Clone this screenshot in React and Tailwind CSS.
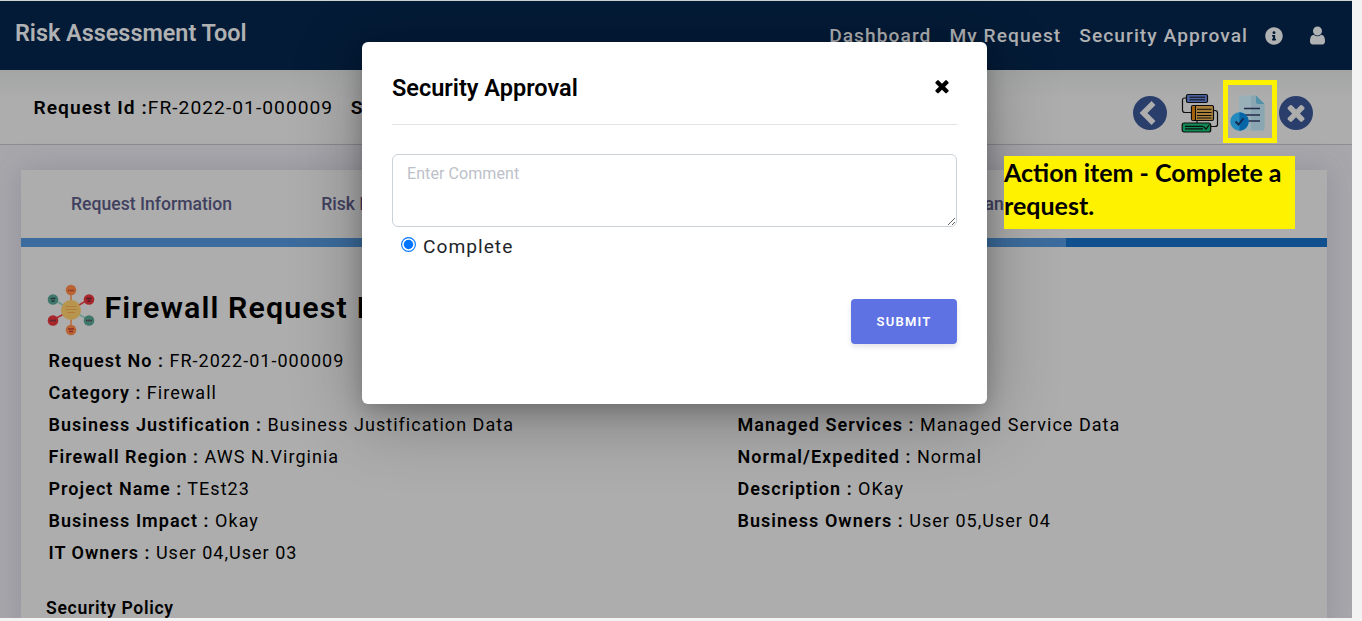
import React from "react";
import { FaInfoCircle } from "react-icons/fa";

const leftFields = [
  ["Request No :", "FR-2022-01-000009"],
  ["Category :", "Firewall"],
  ["Business Justification :", "Business Justification Data"],
  ["Firewall Region :", "AWS N.Virginia"],
  ["Project Name :", "TEst23"],
  ["Business Impact :", "Okay"],
  ["IT Owners :", "User 04,User 03"],
];

const rightFields = [
  ["Managed Services :", "Managed Service Data"],
  ["Normal/Expedited :", "Normal"],
  ["Description :", "OKay"],
  ["Business Owners :", "User 05,User 04"],
];

const TIMES =
  "M1490 1322q0 40-28 68l-136 136q-28 28-68 28t-68-28l-294-294-294 294q-28 28-68 28t-68-28l-136-136q-28-28-28-68t28-68l294-294-294-294q-28-28-28-68t28-68l136-136q28-28 68-28t68 28l294 294 294-294q28-28 68-28t68 28l136 136q28 28 28 68t-28 68l-294 294 294 294q28 28 28 68z";

const USER =
  "M1536 1399q0 109-62.5 187t-150.5 78h-854q-88 0-150.5-78t-62.5-187q0-85 8.5-160.5t31.5-152 58.5-131 94-89 134.5-34.5q131 128 313 128t313-128q76 0 134.5 34.5t94 89 58.5 131 31.5 152 8.5 160.5zm-256-887q0 159-112.5 271.5t-271.5 112.5-271.5-112.5-112.5-271.5 112.5-271.5 271.5-112.5 271.5 112.5 112.5 271.5z";

function BackIcon() {
  return (
    <svg width="34" height="34" viewBox="0 0 34 34">
      <circle cx="17" cy="17" r="17" fill="#2a3e6c" />
      <path d="M20.500 7L10.500 17L20.500 27" fill="none" stroke="#adadad" strokeWidth="5.500" />
    </svg>
  );
}

function WorkflowIcon() {
  return (
    <svg width="38" height="40" viewBox="0 0 38 40" fill="none" stroke="#0c0c0c" strokeWidth="1.2">
      <path d="M5 5H3Q1.5 5 1.5 7V17Q1.5 19.500 4 19.500H10M32 17.500H34Q36.500 17.500 36.500 20V31.500Q36.500 33.500 34 33.500H30M16 27V30" />
      <rect x="5.500" y="1.500" width="21" height="8" rx="1.500" fill="#4a62a0" />
      <path d="M8.500 4.200H24M8.500 6.800H24" strokeWidth="1" />
      <rect x="10.500" y="12.500" width="22" height="15" rx="1.500" fill="#a8803a" />
      <path d="M11 13.500H14V27H11Z" fill="#a0600c" stroke="none" />
      <path d="M14.500 13V27M16 16.300H30.500M16 19.500H30.500M16 22.500H30.500M16 25H30.500" strokeWidth="1" />
      <rect x="1.200" y="30" width="28.500" height="9" rx="2" fill="#118b56" />
      <path d="M4 33.300H22M4 35.800H22M22.500 33.500L25 36L28.500 31.500" strokeWidth="1.200" />
    </svg>
  );
}

function CompleteIcon() {
  return (
    <svg width="36" height="36" viewBox="0 0 36 36">
      <path d="M10 0.500H26L34.500 9V33Q34.500 35.500 32 35.500H12Q9 35.500 9 32.500V3Q9 0.500 10 0.500Z" fill="#99b0b8" />
      <path d="M21 0.500H26L34.500 9V33Q34.500 35.500 32 35.500H21Z" fill="#8aa6b2" />
      <path d="M26 0.500L34.500 9H28Q26 9 26 7Z" fill="#5292a8" />
      <path d="M14 13.500H30M15 20H30M18 26H30" stroke="#242a49" strokeWidth="1.700" />
      <circle cx="9.500" cy="26.500" r="9.200" fill="#2489bd" />
      <path d="M9.500 17.300A9.200 9.200 0 0 1 9.500 35.700Z" fill="#0565a7" />
      <path d="M5.500 26.500L8.500 29.500L13.500 23.500" fill="none" stroke="#17284c" strokeWidth="1.900" />
    </svg>
  );
}

function CancelIcon() {
  return (
    <svg width="34" height="34" viewBox="0 0 34 34">
      <circle cx="17" cy="17" r="17" fill="#2a3e6c" />
      <svg x="4.200" y="3.700" width="25.700" height="25.700" viewBox="0 0 1792 1792">
        <path d={TIMES} fill="#adadad" />
      </svg>
    </svg>
  );
}

function HubIcon() {
  return (
    <svg width="48" height="52" viewBox="0 0 48 52">
      <g strokeWidth="1.500">
        <path d="M24 26V6M24 26V46" stroke="#ba6a37" />
        <path d="M24 26L42 15M24 26L6 36" stroke="#ae2f33" />
        <path d="M24 26L6 15M24 26L42 36" stroke="#679b8d" />
      </g>
      <circle cx="24" cy="26" r="10" fill="#b7954f" />
      <path d="M18.500 22.500H29.500M18.500 25.500H29.500M20 28.500H28" stroke="#b17c3b" strokeWidth="1.200" />
      <circle cx="24" cy="6" r="5.300" fill="#b96435" />
      <circle cx="24" cy="46" r="5.300" fill="#b96435" />
      <circle cx="42" cy="15.500" r="5.300" fill="#a6262b" />
      <circle cx="6" cy="36.500" r="5.300" fill="#a6262b" />
      <circle cx="6" cy="15.500" r="5.300" fill="#3f776b" />
      <circle cx="42" cy="36.500" r="5.300" fill="#3f776b" />
      <path d="M21 6.500H27" stroke="#8c2e24" strokeWidth="1.400" strokeDasharray="1.500 .7" />
      <path d="M3 36.500H9M39 36.500H45" stroke="#442a30" strokeWidth="1.400" strokeDasharray="1.500 .7" />
      <path d="M21 45H27M22 47.500H26" stroke="#8c2e24" strokeWidth="1.500" />
      <path d="M39.500 14.500H44.500M40.500 17H43.500" stroke="#501a24" strokeWidth="1.500" />
      <path d="M3.500 14.500H8.500M4.500 17H7.500" stroke="#24343a" strokeWidth="1.500" />
    </svg>
  );
}

function Field({ label, value }) {
  return (
    <div className="h-8 whitespace-nowrap text-[18px] leading-8 tracking-[1.030px]">
      <span className="font-semibold">{label}</span> <span>{value}</span>
    </div>
  );
}

function Nav() {
  return (
    <header className="flex h-[69px] shrink-0 justify-between bg-[#041b37] pl-[15px] pr-[27px] text-[#b0b1b3]">
      <div className="pt-4 text-[23.400px] font-semibold leading-8">Risk Assessment Tool</div>
      <nav className="flex h-[69px] items-center whitespace-nowrap pt-px text-[19.200px] font-medium tracking-[1.050px]">
        <span className="mr-[18px]">Dashboard</span>
        <span className="mr-[18px]">My Request</span>
        <span className="mr-[17px]">Security Approval</span>
        <FaInfoCircle size={18} className="mb-px mr-[24px]" />
        <svg width="21" height="21" viewBox="0 0 1792 1792" className="-mr-[3px] mb-px" fill="currentColor">
          <path d={USER} />
        </svg>
      </nav>
    </header>
  );
}

function ApprovalModal() {
  return (
    <div className="absolute left-[362px] top-[42px] flex h-[362px] w-[625px] flex-col rounded-md bg-white px-[30px] shadow-[0_15px_70px_rgba(0,0,0,0.3),0_5px_20px_rgba(0,0,0,0.2)]">
      <div className="flex h-[83px] shrink-0 items-start justify-between border-b border-[#e1e3e5] pr-[7px] pt-[30px]">
        <h2 className="text-[23.500px] font-semibold leading-8">Security Approval</h2>
        <svg width="20" height="20" viewBox="0 0 1792 1792" className="mr-[-2px] mt-[4px]">
          <path d={TIMES} />
        </svg>
      </div>
      <textarea
        placeholder="Enter Comment"
        className="mt-[29px] h-[73px] w-full shrink-0 resize rounded-md border border-[#cad1d7] bg-white px-[14px] py-[7px] text-[16px] leading-6 tracking-[0.080px] placeholder:text-[#bcc1c9]"
      />
      <label className="mt-[5px] flex h-[30px] items-center pl-[9px] text-[19.200px] tracking-[1px] text-[#212529]">
        <svg width="15" height="15" viewBox="0 0 15 15" className="mb-[6px] mr-[7px]">
          <circle cx="7.500" cy="7.500" r="6.900" fill="#fff" stroke="#0075ff" strokeWidth="1.100" />
          <circle cx="7.500" cy="7.500" r="4.700" fill="#0075ff" />
        </svg>
        Complete
      </label>
      <button className="mt-[37px] h-[45px] w-[106px] self-end rounded bg-[#5e72e4] text-[13px] font-semibold tracking-[1.2px] text-white shadow-[0_3px_5px_rgba(50,50,93,0.13)]">
        SUBMIT
      </button>
    </div>
  );
}

export default function App() {
  return (
    <div className="relative flex h-[621px] w-[1362px] overflow-hidden bg-[#f3f3f3] font-['Roboto',sans-serif] text-black">
      <div className="h-[618px] w-[1352px] overflow-hidden border-t border-[#ccd3d0] bg-[#a8a7ac]">
        <Nav />
        <section className="flex h-[75px] items-center justify-between border-b border-[#8d8c92] bg-linear-to-b from-[#a3a5a4] to-[#adadad] to-40% pl-[33.500px] pr-[39.500px]">
          <div className="whitespace-nowrap pt-[2px] text-[19.200px] tracking-[1.040px]">
            <span className="font-semibold">Request Id :</span>
            <span>FR-2022-01-000009</span>
            <span className="ml-[17.500px] font-semibold">S</span>
          </div>
          <div className="flex items-center pt-[11px]">
            <BackIcon />
            <div className="ml-[14px]">
              <WorkflowIcon />
            </div>
            <div className="ml-[11.500px]">
              <CompleteIcon />
            </div>
            <div className="ml-[12.500px]">
              <CancelIcon />
            </div>
          </div>
        </section>
        <main className="ml-[21px] mt-[25px] h-[460px] w-[1306px] bg-[#adadad] shadow-[0_0_28px_rgba(80,78,105,0.25)]">
          <div className="grid h-[68px] grid-cols-5 items-center text-center text-[17.600px] font-medium text-[#41415f]">
            <span>Request Information</span>
            <span className="pl-[39px] text-left">Risk Information</span>
            <span>Approvals</span>
            <span className="pr-[62px] text-right">Action Plan</span>
            <span>Closure</span>
          </div>
          <div className="grid h-[9px] grid-cols-5">
            <div className="col-span-4 bg-[#3c6c9d]" />
            <div className="bg-[#10508f]" />
          </div>
          <div className="flex items-center pl-[26px] pt-[37px]">
            <HubIcon />
            <h1 className="ml-[9.500px] h-[52px] whitespace-nowrap text-[30.400px] font-semibold leading-[48px] tracking-[1.100px]">
              Firewall Request Information
            </h1>
          </div>
          <div className="flex pl-[27.500px] pt-[9px]">
            <div className="w-[689px]">
              {leftFields.map(([l, v]) => (
                <Field key={l} label={l} value={v} />
              ))}
            </div>
            <div className="pt-16">
              {rightFields.map(([l, v]) => (
                <Field key={l} label={l} value={v} />
              ))}
            </div>
          </div>
          <h3 className="pl-[25px] pt-[27px] text-[17.600px] font-semibold leading-6 tracking-[0.700px]">Security Policy</h3>
        </main>
      </div>
      <ApprovalModal />
      <div className="absolute left-[1223px] top-[80px] h-[63px] w-[54px] border-[5px] border-[#fff200]" />
      <div className="absolute left-[1004px] top-[156px] h-[73px] w-[291px] whitespace-nowrap bg-[#fff200] font-['Lato',sans-serif] text-[25px] font-bold leading-[33px]">
        Action item - Complete a<br />
        request.
      </div>
    </div>
  );
}
